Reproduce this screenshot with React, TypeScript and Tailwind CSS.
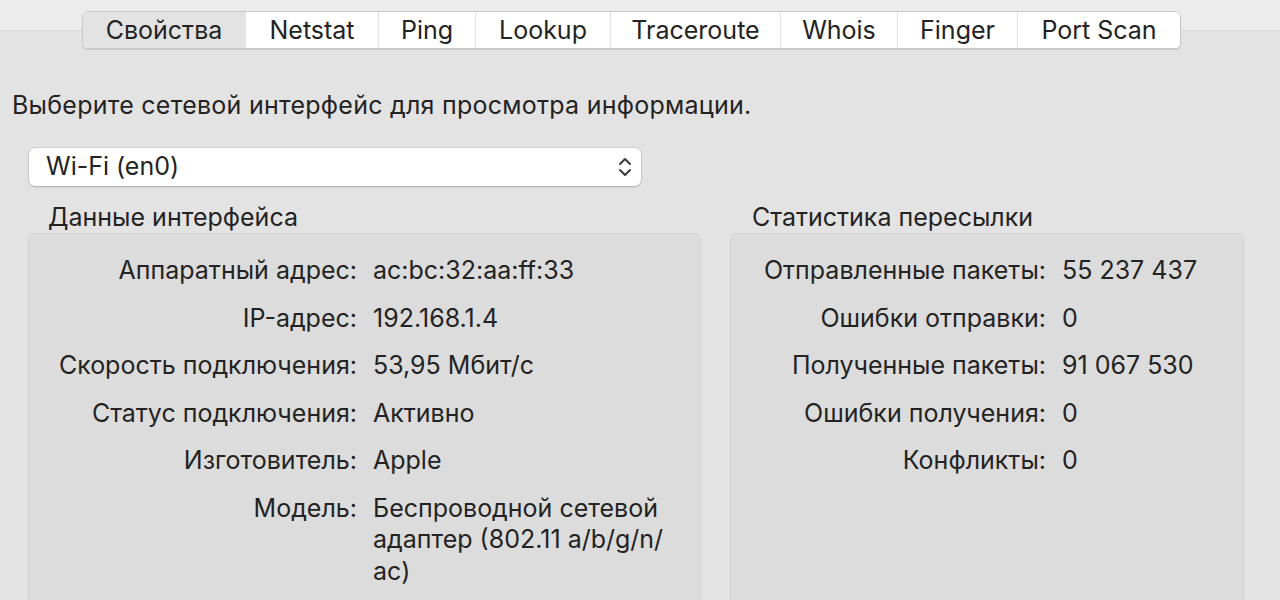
import React from "react";

const tabs: [string, number][] = [
  ["Свойства", 163],
  ["Netstat", 133],
  ["Ping", 97],
  ["Lookup", 135],
  ["Traceroute", 170],
  ["Whois", 117],
  ["Finger", 120],
  ["Port Scan", 163],
];

const leftRows: [string, React.ReactNode][] = [
  ["Аппаратный адрес:", "ac:bc:32:aa:ff:33"],
  ["IP-адрес:", "192.168.1.4"],
  ["Скорость подключения:", "53,95 Мбит/с"],
  ["Статус подключения:", "Активно"],
  ["Изготовитель:", "Apple"],
  [
    "Модель:",
    <>
      Беспроводной сетевой
      <br />
      адаптер (802.11 a/b/g/n/
      <br />
      ac)
    </>,
  ],
];

const rightRows: [string, string][] = [
  ["Отправленные пакеты:", "55 237 437"],
  ["Ошибки отправки:", "0"],
  ["Полученные пакеты:", "91 067 530"],
  ["Ошибки получения:", "0"],
  ["Конфликты:", "0"],
];

function Rows({ rows, labelW }: { rows: [string, React.ReactNode][]; labelW: number }) {
  return (
    <div className="flex flex-col gap-y-[16px] pt-[21px]">
      {rows.map(([l, v], i) => (
        <div key={i} className="flex leading-[31.5px]">
          <div className="text-right shrink-0 whitespace-nowrap" style={{ width: labelW }}>
            {l}
          </div>
          <div className="pl-[16px] whitespace-nowrap">{v}</div>
        </div>
      ))}
    </div>
  );
}

export default function App() {
  return (
    <div className="w-[1280px] h-[600px] overflow-hidden bg-[#e3e3e3] text-[#232323] text-[25px] font-['Inter','Liberation_Sans',sans-serif]">
      <div className="h-[31px] bg-[#ececec] border-b border-[#d6d6d6]" />
      <div className="pl-[82px] -mt-[20px] flex">
        <div className="flex h-[38px] rounded-[6px] bg-white border border-[#c8c8c8] shadow-[0_1px_1px_rgba(0,0,0,0.12)] overflow-hidden">
          {tabs.map(([t, w], i) => (
            <div
              key={t}
              style={{ width: w - (i === 0 ? 1 : 0) }}
              className={
                "flex items-center justify-center leading-none whitespace-nowrap " +
                (i === 0 ? "bg-[#e3e3e3]" : "bg-white border-l border-[#e2e2e2]")
              }
            >
              {t}
            </div>
          ))}
        </div>
      </div>
      <div className="pl-[12px] mt-[40px] leading-[32px] whitespace-nowrap tracking-[0.25px]">
        Выберите сетевой интерфейс для просмотра информации.
      </div>
      <div className="pl-[29px] mt-[27px]">
        <div className="w-[612px] h-[38px] bg-white rounded-[6px] shadow-[0_0_0_0.5px_rgba(0,0,0,0.15),0_1px_2px_rgba(0,0,0,0.2)] flex items-center justify-between pl-[17px] pr-[8px]">
          <span>Wi-Fi (en0)</span>
          <svg width="16" height="26" viewBox="0 0 16 26" fill="none" stroke="#3a3a3a" strokeWidth="2" strokeLinecap="round" strokeLinejoin="round">
            <path d="M3 10 L8 5 L13 10" />
            <path d="M3 16 L8 21 L13 16" />
          </svg>
        </div>
      </div>
      <div className="flex pl-[28px] mt-[15px] gap-[29px]">
        <div className="w-[673px] shrink-0">
          <div className="pl-[20px] leading-[32px] whitespace-nowrap">Данные интерфейса</div>
          <div className="h-[400px] bg-[#dcdcdc] rounded-[6px] border border-[#d2d2d2]">
            <Rows rows={leftRows} labelW={328} />
          </div>
        </div>
        <div className="w-[514px] shrink-0">
          <div className="pl-[22px] leading-[32px] whitespace-nowrap">Статистика пересылки</div>
          <div className="h-[400px] bg-[#dcdcdc] rounded-[6px] border border-[#d2d2d2]">
            <Rows rows={rightRows} labelW={315} />
          </div>
        </div>
      </div>
    </div>
  );
}
